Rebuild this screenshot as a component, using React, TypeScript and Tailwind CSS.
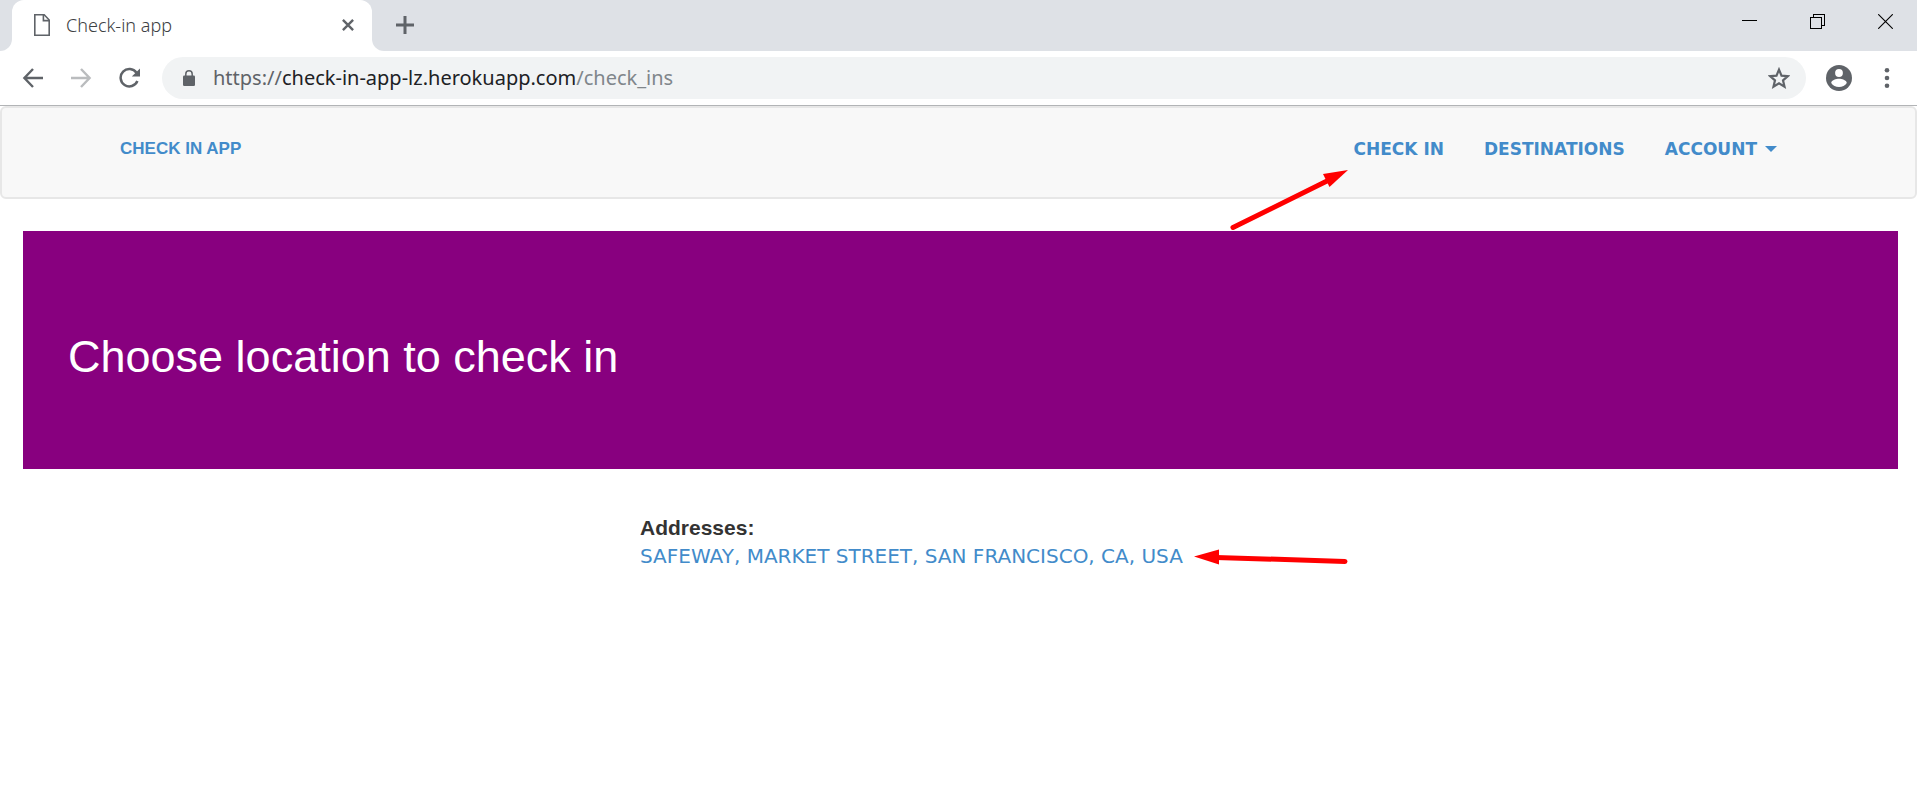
import React from "react";

function BrowserTabs() {
  return (
    <div className="flex h-[51px] items-start bg-[#dee1e6]">
      <div className="h-[51px] w-3 bg-white">
        <div className="h-[51px] rounded-br-[12px] bg-[#dee1e6]" />
      </div>
      <div className="flex h-[51px] w-[360px] items-center rounded-t-[12px] bg-white pr-[14px] pb-px pl-[22px]">
        <svg className="h-[22px] w-4 shrink-0" viewBox="0 0 16 22" fill="none" stroke="#5f6368" strokeWidth="1.600">
          <path d="M.8.8h9.400l5 5.200v15.200H.8z" />
          <path d="M9.400 1v5.600H15" />
        </svg>
        <span className="ml-4 flex-1 font-['Noto_Sans','Open_Sans',sans-serif] text-[18px] leading-6 font-light text-[#3c4043]">
          Check-in app
        </span>
        <button type="button" aria-label="Close tab" className="p-1">
          <svg className="size-3" viewBox="0 0 12 12" stroke="#5f6368" strokeWidth="2.400">
            <path d="M.9.9l10.200 10.200M11.100.9L.9 11.100" />
          </svg>
        </button>
      </div>
      <div className="h-[51px] w-3 bg-white">
        <div className="h-[51px] rounded-bl-[12px] bg-[#dee1e6]" />
      </div>
      <button type="button" aria-label="New tab" className="flex h-[51px] w-[42px] items-center justify-center pb-px">
        <svg className="size-[18px]" viewBox="0 0 18 18" stroke="#5f6368" strokeWidth="3">
          <path d="M9 0v18M0 9h18" />
        </svg>
      </button>
      <div className="flex-1" />
      <div className="flex h-[43px] gap-1">
        <button type="button" aria-label="Minimize" className="flex w-16 items-center justify-center">
          <svg className="h-4 w-[15px]" viewBox="0 0 15 16" shapeRendering="crispEdges">
            <path d="M0 6h15v1H0z" />
          </svg>
        </button>
        <button type="button" aria-label="Restore" className="flex w-16 items-center justify-center">
          <svg className="size-[15px]" viewBox="0 0 15 15" fill="none" stroke="#000" shapeRendering="crispEdges">
            <path d="M.5 3.500h11v11H.5zM3.500 3.500v-3h11v11h-3" />
          </svg>
        </button>
        <button type="button" aria-label="Close window" className="flex w-16 items-center justify-center">
          <svg className="size-[15px]" viewBox="0 0 15 15" stroke="#000" strokeWidth="1.100">
            <path d="M.2.2l14.600 14.600M14.800.2L.2 14.800" />
          </svg>
        </button>
      </div>
    </div>
  );
}

function Toolbar() {
  return (
    <div className="flex h-[55px] items-center border-b border-[#b2b4b6] bg-white pr-[19px] pl-[22px]">
      <button type="button" aria-label="Back">
        <svg className="h-5 w-[22px]" viewBox="0 0 22 20" fill="none" stroke="#5f6368" strokeWidth="2.400">
          <path d="M11 1L2.400 10 11 19M2 10h19" />
        </svg>
      </button>
      <button type="button" aria-label="Forward" className="ml-[26px]">
        <svg className="h-5 w-[22px]" viewBox="0 0 22 20" fill="none" stroke="#babcbe" strokeWidth="2.400">
          <path d="M11 1l8.600 9L11 19M20 10H1" />
        </svg>
      </button>
      <button type="button" aria-label="Reload" className="ml-[27px]">
        <svg className="size-[22px]" viewBox="0 0 22 22" fill="none" stroke="#5f6368" strokeWidth="2.500">
          <path d="M18.400 14a8.700 8.700 0 1 1-.9-8.200" />
          <path d="M21 1.400v8.200h-8.200z" fill="#5f6368" stroke="none" />
        </svg>
      </button>
      <div className="ml-[21px] flex h-[42px] flex-1 items-center rounded-full bg-[#f1f3f4] pr-4 pl-[21px]">
        <svg className="h-4 w-3 shrink-0" viewBox="0 0 12 16">
          <rect x="0" y="5.500" width="12" height="10.500" rx="1.300" fill="#5f6368" />
          <path d="M2.800 7V4a3.200 3.200 0 0 1 6.400 0v3" fill="none" stroke="#5f6368" strokeWidth="1.500" />
        </svg>
        <p className="ml-[18px] flex-1 font-['Noto_Sans','Open_Sans',sans-serif] text-[20px] text-[#80868b]">
          <span className="text-[#5f6368]">https://</span>
          <span className="text-[#202124]">check-in-app-lz.herokuapp.com</span>/check_ins
        </p>
        <button type="button" aria-label="Bookmark this page">
          <svg className="size-[22px]" viewBox="0 0 22 22" fill="none" stroke="#5f6368" strokeWidth="2.200">
            <path d="M11 2.600l2.500 6 6.300.5-4.800 4.200 1.500 6.300L11 16.200l-5.500 3.400L7 13.300 2.200 9.100l6.300-.5z" />
          </svg>
        </button>
      </div>
      <button type="button" aria-label="Profile" className="ml-5">
        <svg className="size-[26px]" viewBox="0 0 26 26">
          <circle cx="13" cy="13" r="13" fill="#5f6368" />
          <circle cx="13" cy="8" r="3.900" fill="#fff" />
          <path d="M5.200 18c0-2.800 5.200-4.200 7.800-4.200s7.800 1.400 7.800 4.200c-1.600 2.500-4.500 4-7.800 4s-6.200-1.500-7.800-4z" fill="#fff" />
        </svg>
      </button>
      <button type="button" aria-label="Browser menu" className="ml-[26px] w-5">
        <svg className="h-5 w-[18px]" viewBox="0 0 18 20" fill="#5f6368">
          <circle cx="9" cy="2.300" r="2.300" />
          <circle cx="9" cy="10" r="2.300" />
          <circle cx="9" cy="17.700" r="2.300" />
        </svg>
      </button>
    </div>
  );
}

function SiteNav() {
  return (
    <nav className="relative flex h-[93px] items-start justify-between rounded-[6px] border-2 border-[#e7e7e7] bg-[#f8f8f8] pt-[29px] pr-[138px] pl-[118px] text-[17px] leading-6 font-bold text-[#428bca]">
      <a href="#home" className="font-['Liberation_Sans',Arial,sans-serif]">
        CHECK IN APP
      </a>
      <div className="flex gap-10 font-['DejaVu_Sans',Verdana,sans-serif]">
        <a href="#check-in">CHECK IN</a>
        <a href="#destinations">DESTINATIONS</a>
        <button type="button" className="flex items-center gap-2">
          ACCOUNT
          <svg className="h-[6px] w-3" viewBox="0 0 12 6" fill="#428bca">
            <path d="M0 0h12L6 6z" />
          </svg>
        </button>
      </div>
      <svg className="absolute top-[60px] right-[564px] h-[64px] w-[122px]" viewBox="0 0 122 64" fill="#f00">
        <path d="M4 59.500L98 13" fill="none" stroke="#f00" strokeWidth="5" strokeLinecap="round" />
        <path d="M119 2L94 6l6.500 13z" />
      </svg>
    </nav>
  );
}

export default function App() {
  return (
    <div className="min-h-screen bg-white">
      <header>
        <BrowserTabs />
        <Toolbar />
      </header>
      <SiteNav />
      <main className="pr-[19px] pl-[23px]">
        <section className="mt-8 bg-[#88007f] px-[45px] pt-[101px] pb-[87px]">
          <h1 className="font-['Liberation_Sans',Arial,sans-serif] text-[45px] leading-[50px] text-white">
            Choose location to check in
          </h1>
        </section>
        <section className="ml-[617px] pt-[45px] leading-[29px]">
          <h2 className="font-['Liberation_Sans',Arial,sans-serif] text-[21px] leading-7 font-bold text-[#333]">
            Addresses:
          </h2>
          <div className="flex items-center gap-[11px]">
            <a href="#safeway" className="font-['DejaVu_Sans',Verdana,sans-serif] text-[20px] text-[#428bca]">
              SAFEWAY, MARKET STREET, SAN FRANCISCO, CA, USA
            </a>
            <svg className="h-[17px] w-[155px]" viewBox="0 0 155 17" fill="#f00">
              <path d="M22 9.400l129 4" fill="none" stroke="#f00" strokeWidth="5" strokeLinecap="round" />
              <path d="M0 8.500L25 1.500v15z" />
            </svg>
          </div>
        </section>
      </main>
    </div>
  );
}
